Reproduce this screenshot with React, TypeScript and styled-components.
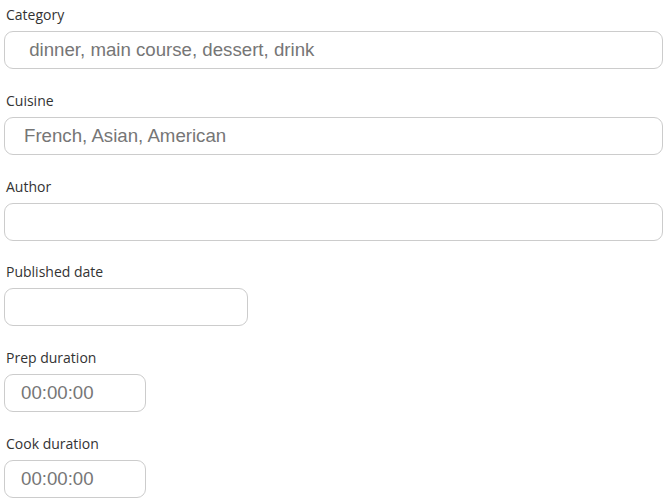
import { FunctionComponent } from "react";
import styled, { createGlobalStyle } from "styled-components";

const GlobalStyle = createGlobalStyle`
  body {
    margin: 0;
    background: #ffffff;
  }
`;

type Size = "full" | "date" | "duration";

interface Field {
  label: string;
  placeholder?: string;
  size: Size;
}

const fields: Field[] = [
  { label: "Category", placeholder: " dinner, main course, dessert, drink", size: "full" },
  { label: "Cuisine", placeholder: "French, Asian, American", size: "full" },
  { label: "Author", size: "full" },
  { label: "Published date", size: "date" },
  { label: "Prep duration", placeholder: "00:00:00", size: "duration" },
  { label: "Cook duration", placeholder: "00:00:00", size: "duration" },
];

const widths: Record<Size, string> = {
  full: "100%",
  date: "244px",
  duration: "142px",
};

const App: FunctionComponent = () => {
  return (
    <>
      <GlobalStyle />
      <Form>
        {fields.map((field) => (
          <FieldGroup key={field.label}>
            <Label>{field.label}</Label>
            <Input
              type="text"
              placeholder={field.placeholder}
              $size={field.size}
            />
          </FieldGroup>
        ))}
      </Form>
    </>
  );
};

const Form = styled.form`
  display: flex;
  flex-direction: column;
  gap: 20.8px;
  padding: 4px 8px 0 4px;
`;

const FieldGroup = styled.div`
  display: flex;
  flex-direction: column;
  gap: 7px;
`;

const Label = styled.label`
  font-family: "Open Sans", "Noto Sans", sans-serif;
  font-size: 14px;
  line-height: 20px;
  color: #333333;
  padding: 1px 0 0 2px;
  margin-bottom: -1px;
`;

const Input = styled.input<{ $size: Size }>`
  box-sizing: border-box;
  width: ${({ $size }) => widths[$size]};
  height: 38px;
  margin: 0;
  padding: 0 0 0 ${({ $size }) => ($size === "duration" ? "16px" : "19px")};
  border: 1px solid #cccccc;
  border-radius: 9px;
  background: #ffffff;
  font-family: "Liberation Sans", Arial, sans-serif;
  font-size: 18.67px;
  color: #333333;
  outline: none;

  &::placeholder {
    color: #767676;
  }
`;

export default App;
